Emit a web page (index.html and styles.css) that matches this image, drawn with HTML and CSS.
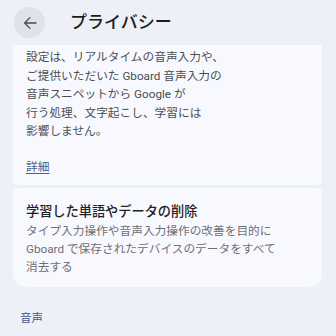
FILE: index.html
```html
<!DOCTYPE html>
<html lang="ja">
<head>
  <meta charset="utf-8">
  <meta name="viewport" content="width=device-width">
  <title>プライバシー</title>
  <link rel="stylesheet" href="styles.css">
</head>
<body>
<header class="appbar">
  <div class="backBtn">
    <svg width="14" height="14" viewBox="0 0 14 14">
      <path d="M13 7H1.8M7 1.6L1.6 7 7 12.4" fill="none" stroke="#4a4c52" stroke-width="1.3" stroke-linecap="round" stroke-linejoin="round"/>
    </svg>
  </div>
  <h1 class="title">プライバシー</h1>
</header>
<main>
  <section class="card cardTop">
    <p class="desc">設定は、リアルタイムの音声入力や、<br>ご提供いただいた Gboard 音声入力の<br>音声スニペットから Google が<br>行う処理、文字起こし、学習には<br>影響しません。</p>
    <a class="more" href="#">詳細</a>
  </section>
  <section class="card cardBottom">
    <h2 class="itemTitle">学習した単語やデータの削除</h2>
    <p class="itemSub">タイプ入力操作や音声入力操作の改善を目的に<br>Gboard で保存されたデバイスのデータをすべて<br>消去する</p>
  </section>
  <h3 class="section">音声</h3>
</main>
</body>
</html>
```
FILE: styles.css
```css
* {
  box-sizing: border-box;
}

body {
  margin: 0;
  background-color: #eef0f8;
  font-family: Roboto, "Noto Sans CJK JP", sans-serif;
  color: #1c1d21;
}

.appbar {
  height: 45px;
  display: flex;
  align-items: center;
  padding-left: 14px;
}

.backBtn {
  width: 31px;
  height: 31px;
  border-radius: 50%;
  background-color: #e0e2ea;
  display: flex;
  align-items: center;
  justify-content: center;
}

.title {
  margin: 0 0 0 25px;
  font-size: 17px;
  font-weight: 500;
  color: #1b1c20;
  line-height: 1;
}

.card {
  background-color: #f8f9fe;
  margin: 0 14px 0 13px;
  padding: 0 13px;
}

.cardTop {
  padding-top: 3px;
  padding-bottom: 9px;
  border-radius: 0 0 4px 4px;
}

.desc {
  margin: 0;
  font-size: 11.7px;
  line-height: 18.5px;
  color: #4b4d53;
}

.more {
  display: inline-block;
  margin-top: 17px;
  font-size: 11.7px;
  line-height: 18.5px;
  color: #4f5e88;
  text-decoration: underline;
  text-underline-offset: 2px;
}

.cardBottom {
  margin-top: 3px;
  padding-top: 14px;
  padding-bottom: 11px;
  border-radius: 4px 4px 13px 13px;
}

.itemTitle {
  margin: 0;
  font-size: 13.2px;
  font-weight: 500;
  line-height: 20px;
  color: #1f2024;
}

.itemSub {
  margin: 0;
  font-size: 11.7px;
  line-height: 18px;
  color: #6d6f75;
}

.section {
  margin: 22px 0 0 20px;
  font-size: 11.5px;
  font-weight: 400;
  line-height: 18px;
  color: #435892;
}
```
